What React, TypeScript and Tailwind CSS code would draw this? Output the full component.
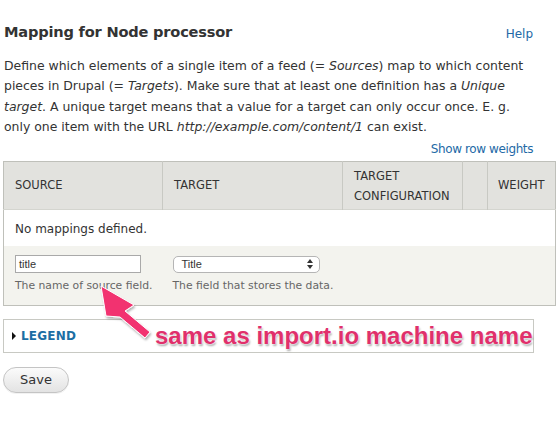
import React from 'react';

const FONT = { fontFamily: '"DejaVu Sans", "Open Sans", sans-serif' };

export default function App() {
  return (
    <div className="relative w-[558px] h-[433px] bg-white text-[#333] overflow-hidden pl-[3px] pr-[3px]" style={FONT}>
      <div className="flex items-end justify-between pt-[22px] pl-[1px] pr-[22px]">
        <h2 className="text-[14.6px] font-bold leading-[20px] tracking-[-0.2px] text-[#333]">Mapping for Node processor</h2>
        <a className="text-[12px] leading-[16px] text-[#2369a6]">Help</a>
      </div>

      <p className="mt-[14px] pl-[1px] text-[12.45px] leading-[20.3px]">
        Define which elements of a single item of a feed (= <em>Sources</em>) map to which content<br />
        pieces in Drupal (= <em>Targets</em>). Make sure that at least one definition has a <em>Unique</em><br />
        <em>target</em>. A unique target means that a value for a target can only occur once. E. g.<br />
        only one item with the URL <em>http://example.com/content/1</em> can exist.
      </p>

      <div className="flex justify-end pr-[22px] mt-[4px]">
        <a className="text-[12px] leading-[16px] text-[#2369a6] tracking-[-0.4px]">Show row weights</a>
      </div>

      <table className="mt-[4px] w-[552px] border-collapse border border-[#bfc0ba] text-[11.5px] table-fixed">
        <colgroup>
          <col className="w-[159px]" />
          <col className="w-[180px]" />
          <col className="w-[120px]" />
          <col className="w-[25px]" />
          <col className="w-[68px]" />
        </colgroup>
        <thead>
          <tr className="bg-[#e2e2de] h-[48px]">
            <th className="text-left font-normal pl-[11px] border-r border-[#c8c9c3]">SOURCE</th>
            <th className="text-left font-normal pl-[11px] border-r border-[#c8c9c3]">TARGET</th>
            <th className="text-left font-normal pl-[11px] leading-[20px] border-r border-[#c8c9c3]">TARGET<br />CONFIGURATION</th>
            <th className="border-r border-[#c8c9c3]"></th>
            <th className="text-left font-normal pl-[10px]">WEIGHT</th>
          </tr>
        </thead>
        <tbody>
          <tr className="bg-white h-[36px] border-t border-[#d4d5cf]">
            <td colSpan={5} className="pl-[11px] pt-[3px] text-[12px]">No mappings defined.</td>
          </tr>
          <tr className="bg-[#f3f3ee] h-[60px]">
            <td className="pl-[11px] align-top pt-[9px]">
              <div className="w-[126px] h-[18px] border border-[#a9a9a9] bg-white text-[11px] leading-[16px] pl-[3px]" style={{ fontFamily: '"Liberation Sans", sans-serif' }}>title</div>
              <div className="mt-[5px] text-[#666] text-[10.8px] leading-[16px] whitespace-nowrap">The name of source field.</div>
            </td>
            <td colSpan={4} className="pl-[10px] align-top pt-[10px]">
              <div className="w-[147px] h-[17px] border border-[#b5b5b5] rounded-[5px] bg-white flex items-center justify-between pl-[8px] pr-[6px] text-[11px]" style={{ fontFamily: '"Liberation Sans", sans-serif' }}>
                <span>Title</span>
                <svg width="6" height="10" viewBox="0 0 6 10">
                  <path d="M0 4 L3 0 L6 4 Z" fill="#333" />
                  <path d="M0 6 L3 10 L6 6 Z" fill="#333" />
                </svg>
              </div>
              <div className="mt-[5px] text-[#666] text-[10.8px] leading-[16px] whitespace-nowrap">The field that stores the data.</div>
            </td>
          </tr>
        </tbody>
      </table>

      <div className="mt-[13px] w-[531px] h-[34px] border border-[#c8c9c3] flex items-center pl-[8px] gap-[5px]">
        <svg width="4" height="8" viewBox="0 0 4 8"><path d="M0 0 L4 4 L0 8 Z" fill="#111" /></svg>
        <span className="text-[12px] font-bold text-[#1c6ea4] tracking-[0.2px]">LEGEND</span>
      </div>

      <button className="mt-[14px] w-[66px] h-[26px] rounded-full border border-[#c4c4c4] bg-gradient-to-b from-[#fbfbfb] to-[#e3e3e3] text-[13px] text-[#333] shadow-[0_1px_0_rgba(0,0,0,0.05)]">Save</button>

      <div
        className="absolute left-[155px] top-[321px] text-[24px] leading-[30px] font-bold text-[#e0306b] whitespace-nowrap"
        style={{ fontFamily: '"Liberation Sans", Arial, sans-serif', textShadow: '0 0 2px #fff, 0 0 2px #fff, 1px 2px 2px rgba(0,0,0,0.35)' }}
      >
        same as import.io machine name
      </div>

      <svg className="absolute left-0 top-0 pointer-events-none" width="558" height="433" viewBox="0 0 558 433">
        <defs>
          <filter id="sh" x="-20%" y="-20%" width="140%" height="140%">
            <feDropShadow dx="1" dy="2" stdDeviation="1.2" floodColor="#000" floodOpacity="0.3" />
          </filter>
        </defs>
        <path
          d="M101 286 L134 305 L125 311 L150 332 L145 338 L120 317 L106 316 Z"
          fill="#f2306f"
          stroke="#fff"
          strokeWidth="1"
          strokeLinejoin="round"
          filter="url(#sh)"
        />
      </svg>
    </div>
  );
}
